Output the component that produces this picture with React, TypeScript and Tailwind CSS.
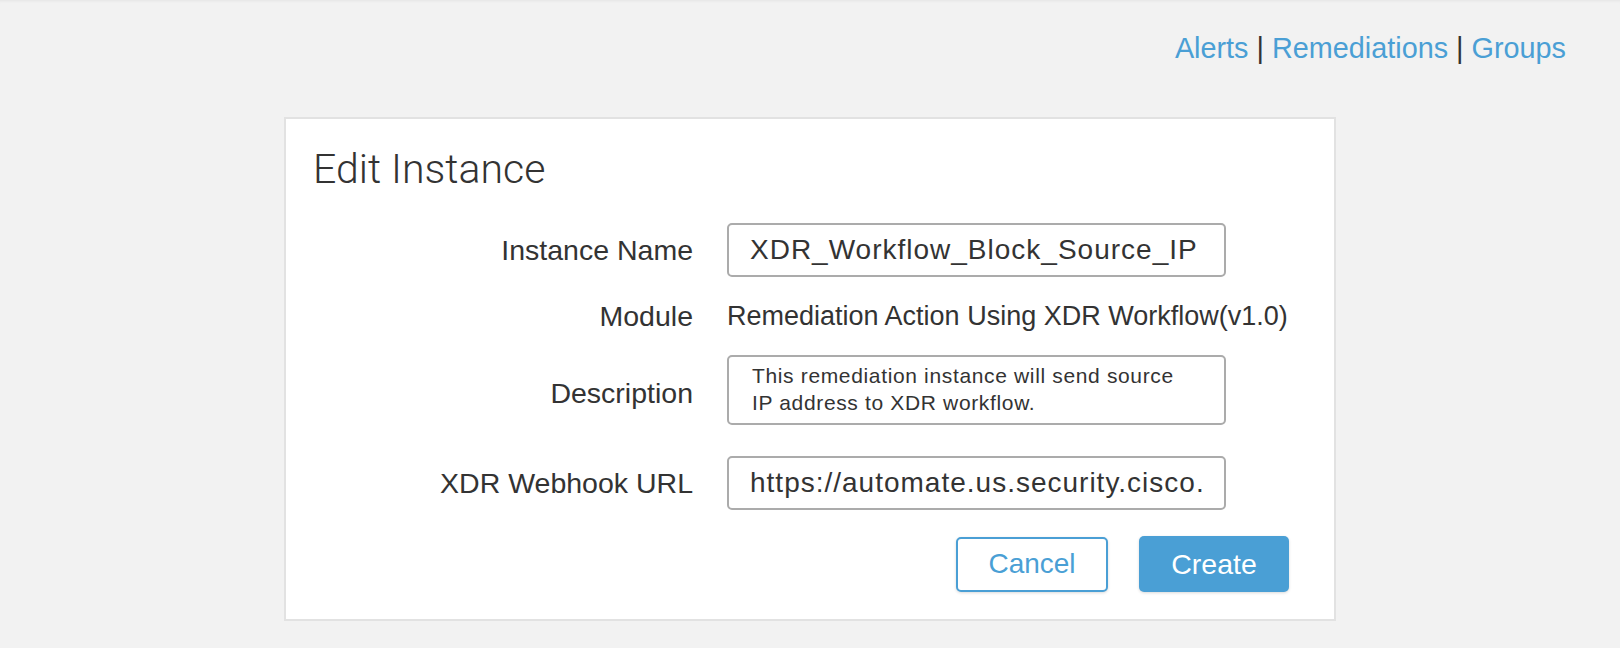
import type { ReactNode } from "react";

function Row({
  label,
  children,
  className = "",
  labelClass = "",
}: {
  label: string;
  children: ReactNode;
  className?: string;
  labelClass?: string;
}) {
  return (
    <div className={`flex items-center ${className}`}>
      <div className={`w-[380px] text-right text-[28.5px] leading-[32px] text-[#333] ${labelClass}`}>{label}</div>
      <div className="ml-[34px] w-[499px]">{children}</div>
    </div>
  );
}

function Field({ children }: { children: ReactNode }) {
  return (
    <div className="flex h-[54px] items-center overflow-hidden whitespace-nowrap rounded-[5px] border-2 border-[#ababab] pl-[21px] text-[28px] leading-[32px] tracking-[1px] text-[#333]">
      {children}
    </div>
  );
}

export default function App() {
  return (
    <div className="min-h-screen bg-[#f2f2f2] font-['Liberation_Sans',Arial,sans-serif] text-[#333] shadow-[inset_0_3px_3px_-2px_rgba(0,0,0,0.06)]">
      <nav className="pr-[54px] pt-[32px] text-right text-[28.8px] leading-[32px]">
        <a href="#" className="text-[#4a9fd5]">Alerts</a>
        <span className="text-[#333]"> | </span>
        <a href="#" className="text-[#4a9fd5]">Remediations</a>
        <span className="text-[#333]"> | </span>
        <a href="#" className="text-[#4a9fd5]">Groups</a>
      </nav>

      <div className="mx-auto mt-[53px] w-[1052px] border-2 border-[#e2e2e2] bg-white pb-[27px] pl-[27px] pr-[45px] pt-[26px]">
        <h1 className="font-['Roboto',sans-serif] text-[41px] font-light leading-[48px] text-[#333]">Edit Instance</h1>

        <Row label="Instance Name" className="mt-[30px]">
          <Field>XDR_Workflow_Block_Source_IP</Field>
        </Row>

        <Row label="Module" className="mt-[23px]">
          <div className="whitespace-nowrap text-[27px] leading-[32px] text-[#333]">
            Remediation Action Using XDR Workflow(v1.0)
          </div>
        </Row>

        <Row label="Description" className="mt-[23px]" labelClass="pt-[6px]">
          <div className="h-[70px] rounded-[5px] border-2 border-[#ababab] pl-[23px] pt-[5px] text-[21px] leading-[27px] tracking-[0.65px] text-[#333]">
            This remediation instance will send source
            <br />
            IP address to XDR workflow.
          </div>
        </Row>

        <Row label="XDR Webhook URL" className="mt-[31px]">
          <Field>https://automate.us.security.cisco.</Field>
        </Row>

        <div className="mt-[26px] flex items-center justify-end gap-[31px]">
          <button className="h-[55px] w-[152px] rounded-[5px] border-2 border-[#4a9fd5] bg-white text-[28px] text-[#4a9fd5] shadow-[0_1px_3px_rgba(0,0,0,0.15)]">
            Cancel
          </button>
          <button className="h-[56px] w-[150px] rounded-[5px] bg-[#4a9fd5] text-[28.5px] text-white shadow-[0_1px_3px_rgba(0,0,0,0.15)]">
            Create
          </button>
        </div>
      </div>
    </div>
  );
}
